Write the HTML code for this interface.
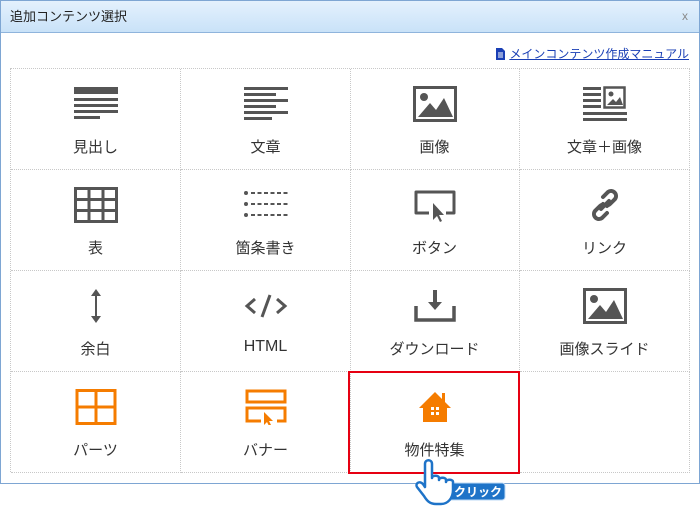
<!DOCTYPE html>
<html><head><meta charset="utf-8"><style>
*{margin:0;padding:0;box-sizing:border-box}
body{width:700px;height:506px;background:#fff;font-family:"Liberation Sans","Noto Sans CJK JP",sans-serif;position:relative;overflow:hidden;color:#333}
.dlg{position:absolute;left:0;top:0;width:700px;height:484px;border:1px solid #7ea6d3;background:#fff}
.hd{position:absolute;left:0;top:0;width:698px;height:32px;background:linear-gradient(#e4f1fd,#c9e2f8);border-bottom:1px solid #8fb4dc;font-size:13px;line-height:32px;padding-left:9px;color:#222}
.x{position:absolute;right:11px;top:-1px;font-size:12px;color:#888}
.lnk{position:absolute;right:10px;top:44px;font-size:12px;color:#1a3fb5;text-decoration:underline}
.lnk svg{vertical-align:-2px;margin-right:4px}
.cell{position:absolute;width:170px;height:101px;border-right:1px dotted #c8c8c8;border-bottom:1px dotted #c8c8c8}
.cell svg{position:absolute;left:50%;top:17px;transform:translateX(-50%)}
.cell span{position:absolute;left:0;right:0;top:67px;text-align:center;font-size:15px;color:#333}
.grid{position:absolute;left:10px;top:68px;width:680px;height:404px;border-left:1px dotted #c8c8c8;border-top:1px dotted #c8c8c8}
.red{position:absolute;left:348px;top:371px;width:172px;height:103px;border:2px solid #e60012}
</style></head><body>
<div class="dlg">
<div class="hd">追加コンテンツ選択<span class="x">x</span></div>
<div class="lnk"><svg width="9" height="12" viewBox="0 0 9 12"><path d="M0 0h6l3 3v9H0z" fill="#1a3fb5"/><path d="M2 5h5M2 7h5M2 9h5" stroke="#fff"/></svg>メインコンテンツ作成マニュアル</div>
</div>
<div class="grid">
<div class="cell" style="left:0;top:0"><svg width="44" height="36" viewBox="0 0 44 36" fill="#555"><rect x="0" y="1" width="44" height="7"/><rect x="0" y="12" width="44" height="3"/><rect x="0" y="18" width="44" height="3"/><rect x="0" y="24" width="44" height="3"/><rect x="0" y="30" width="26" height="3"/></svg><span>見出し</span></div>
<div class="cell" style="left:170px;top:0"><svg width="44" height="36" viewBox="0 0 44 36" fill="#555"><rect x="0" y="1" width="44" height="3"/><rect x="0" y="7" width="32" height="3"/><rect x="0" y="13" width="44" height="3"/><rect x="0" y="19" width="32" height="3"/><rect x="0" y="25" width="44" height="3"/><rect x="0" y="31" width="28" height="3"/></svg><span>文章</span></div>
<div class="cell" style="left:339px;top:0"><svg width="44" height="36" viewBox="0 0 44 36"><rect x="1.5" y="1.5" width="41" height="33" fill="none" stroke="#555" stroke-width="3"/><circle cx="11" cy="11" r="4" fill="#555"/><path d="M5 31l12-14 6 7 8-12 9 19z" fill="#555"/></svg><span>画像</span></div>
<div class="cell" style="left:509px;top:0"><svg width="44" height="36" viewBox="0 0 44 36" fill="#555"><rect x="0" y="1" width="18" height="3"/><rect x="0" y="7" width="18" height="3"/><rect x="0" y="13" width="18" height="3"/><rect x="0" y="19" width="18" height="3"/><rect x="21.5" y="1.5" width="20" height="20" fill="none" stroke="#555" stroke-width="2.5"/><circle cx="28" cy="8" r="2.5"/><path d="M24 19l6-6 3 3 4-5 3 8z"/><rect x="0" y="26" width="44" height="3"/><rect x="0" y="32" width="44" height="3"/></svg><span>文章＋画像</span></div>

<div class="cell" style="left:0;top:101px"><svg width="44" height="36" viewBox="0 0 44 36"><rect x="1.5" y="1.5" width="41" height="33" fill="none" stroke="#555" stroke-width="3"/><path d="M15 1v34M29 1v34M1 12.5h42M1 23.5h42" stroke="#555" stroke-width="3"/></svg><span>表</span></div>
<div class="cell" style="left:170px;top:101px"><svg width="44" height="36" viewBox="0 0 44 36" fill="#555"><circle cx="2" cy="6" r="2"/><circle cx="2" cy="17" r="2"/><circle cx="2" cy="28" r="2"/><path d="M7 6h37M7 17h37M7 28h37" stroke="#555" stroke-width="2" stroke-dasharray="4 2.5"/></svg><span>箇条書き</span></div>
<div class="cell" style="left:339px;top:101px"><svg width="44" height="36" viewBox="0 0 44 36"><path d="M16 26H3V5h38v21H33" fill="none" stroke="#555" stroke-width="3" stroke-linejoin="round"/><path d="M20 16v17l4-4 3 6 2-1-3-6h5z" fill="#555"/></svg><span>ボタン</span></div>
<div class="cell" style="left:509px;top:101px"><svg width="44" height="36" viewBox="0 0 44 36"><g fill="none" stroke="#555" stroke-width="4" stroke-linecap="round"><path d="M20 10l5-5a5 5 0 017 7l-5 5a5 5 0 01-7 0"/><path d="M24 26l-5 5a5 5 0 01-7-7l5-5a5 5 0 017 0"/><path d="M18 22l8-8"/></g></svg><span>リンク</span></div>

<div class="cell" style="left:0;top:202px"><svg width="44" height="36" viewBox="0 0 44 36"><path d="M22 4v28" stroke="#555" stroke-width="2"/><path d="M17 8l5-7 5 7zM17 28l5 7 5-7z" fill="#555"/></svg><span>余白</span></div>
<div class="cell" style="left:170px;top:202px"><svg width="44" height="36" viewBox="0 0 44 36"><path d="M11 11l-8 7 8 7M33 11l8 7-8 7M26 7l-8 22" fill="none" stroke="#555" stroke-width="3"/></svg><span style="font-size:16px">HTML</span></div>
<div class="cell" style="left:339px;top:202px"><svg width="44" height="36" viewBox="0 0 44 36"><path d="M3 18v14h38V18" fill="none" stroke="#555" stroke-width="3.5"/><path d="M20 2h4v12h5l-7 8-7-8h5z" fill="#555"/></svg><span>ダウンロード</span></div>
<div class="cell" style="left:509px;top:202px"><svg width="44" height="36" viewBox="0 0 44 36"><rect x="1.5" y="1.5" width="41" height="33" fill="none" stroke="#555" stroke-width="3"/><circle cx="11" cy="11" r="4" fill="#555"/><path d="M5 31l12-14 6 7 8-12 9 19z" fill="#555"/></svg><span>画像スライド</span></div>

<div class="cell" style="left:0;top:303px"><svg width="44" height="36" viewBox="0 0 44 36"><rect x="3" y="1.5" width="38" height="33" fill="none" stroke="#f57c00" stroke-width="3"/><path d="M22 1v34M3 18h38" stroke="#f57c00" stroke-width="3"/></svg><span>パーツ</span></div>
<div class="cell" style="left:170px;top:303px"><svg width="44" height="36" viewBox="0 0 44 36"><rect x="3" y="2" width="38" height="11" fill="none" stroke="#f57c00" stroke-width="3"/><path d="M17 32H3V19h38v13H33" fill="none" stroke="#f57c00" stroke-width="3"/><path d="M20 23v13l3-3 2 4 2-1-2-4h4z" fill="#f57c00"/></svg><span>バナー</span></div>
<div class="cell" style="left:339px;top:303px"><svg width="44" height="36" viewBox="0 0 44 36"><path d="M22 3L6 19h4v14h24V19h4l-6-6V4h-3v6z" fill="#f57c00"/><rect x="18" y="18" width="3" height="3" fill="#fff"/><rect x="23" y="18" width="3" height="3" fill="#fff"/><rect x="18" y="23" width="3" height="3" fill="#fff"/><rect x="23" y="23" width="3" height="3" fill="#fff"/></svg><span>物件特集</span></div>
<div class="cell" style="left:509px;top:303px"></div>
</div>
<div class="red"></div>
<svg style="position:absolute;left:412px;top:456px" width="96" height="50" viewBox="0 0 96 50">
<rect x="36" y="27" width="57" height="17" rx="3" fill="#1e73c8" stroke="#bcd8f5"/>
<text x="42" y="40" font-family="Liberation Sans,Noto Sans CJK JP,sans-serif" font-size="12" font-weight="bold" fill="#fff">クリック</text>
<path d="M13 8c0-5 7-5 7 0v14c0-3 7-3 7 0v2c0-3 7-3 7 0v2c0-3 7-3 7 0v8c0 8-5 14-12 14h-5c-6 0-9-3-12-8l-7-9c-2-3 2-7 6-3l2 3z" fill="#fff" stroke="#1e73c8" stroke-width="2.5" stroke-linejoin="round"/>
</svg>
</body></html>
